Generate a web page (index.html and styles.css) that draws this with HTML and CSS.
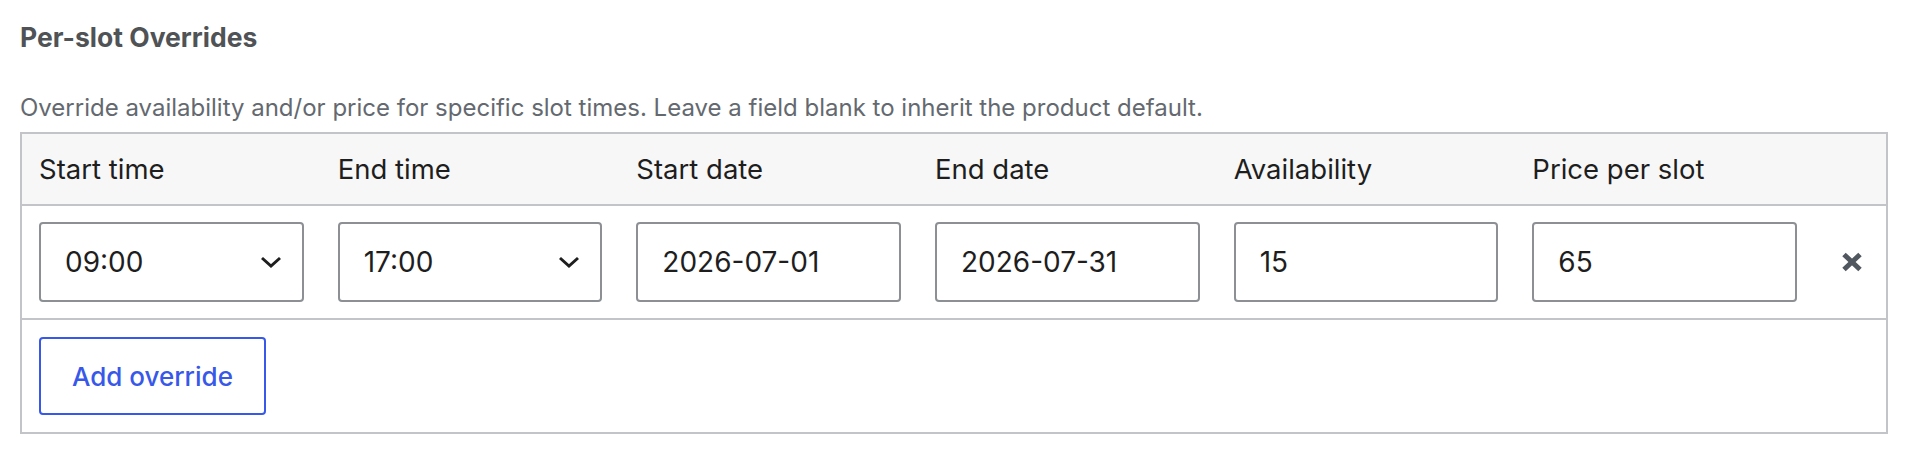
FILE: index.html
```html
<!DOCTYPE html>
<html lang="en">
<head>
<meta charset="utf-8">
<title>Per-slot Overrides</title>
<link rel="stylesheet" href="styles.css">
</head>
<body>
<div class="panel">
  <h3 class="title">Per-slot Overrides</h3>
  <p class="desc">Override availability and/or price for specific slot times. Leave a field blank to inherit the product default.</p>
  <div class="table">
    <div class="row head">
      <div class="cell">Start time</div>
      <div class="cell">End time</div>
      <div class="cell">Start date</div>
      <div class="cell">End date</div>
      <div class="cell">Availability</div>
      <div class="cell">Price per slot</div>
      <div class="cell"></div>
    </div>
    <div class="row body">
      <div class="cell">
        <div class="select-wrap">
          <select class="field select"><option>09:00</option></select>
          <svg class="chev" width="22" height="12" viewBox="0 0 22 12"><path d="M2 2 L11 10 L20 2" fill="none" stroke="#1e1e1e" stroke-width="3"/></svg>
        </div>
      </div>
      <div class="cell">
        <div class="select-wrap">
          <select class="field select"><option>17:00</option></select>
          <svg class="chev" width="22" height="12" viewBox="0 0 22 12"><path d="M2 2 L11 10 L20 2" fill="none" stroke="#1e1e1e" stroke-width="3"/></svg>
        </div>
      </div>
      <div class="cell"><input class="field" type="text" value="2026-07-01"></div>
      <div class="cell"><input class="field" type="text" value="2026-07-31"></div>
      <div class="cell"><input class="field" type="text" value="15"></div>
      <div class="cell"><input class="field" type="text" value="65"></div>
      <div class="cell remove">
        <svg width="22" height="20" viewBox="0 0 22 20"><path d="M3 2.5 L19 17.5 M19 2.5 L3 17.5" fill="none" stroke="#50575e" stroke-width="5" stroke-linecap="butt"/></svg>
      </div>
    </div>
    <div class="foot">
      <button class="add" type="button">Add override</button>
    </div>
  </div>
</div>
</body>
</html>
```

FILE: styles.css
```css
html, body {
  margin: 0;
  padding: 0;
  background: #ffffff;
}

body {
  font-family: Inter, "Noto Sans", "Liberation Sans", sans-serif;
  color: #1e1e1e;
}

.panel {
  padding: 19px 20px 0 20px;
}

.title {
  margin: 0;
  font-size: 26.5px;
  line-height: 36px;
  font-weight: 700;
  color: #505356;
}

.desc {
  margin: 36px 0 7px 0;
  font-size: 24px;
  line-height: 34px;
  color: #646970;
}

.table {
  border: 2px solid #c3c4c7;
}

.row {
  display: grid;
  grid-template-columns: repeat(6, 1fr) 72px;
}

.cell {
  padding: 0 17px;
  display: flex;
  align-items: center;
  min-width: 0;
}

.head {
  background: #f7f7f7;
  border-bottom: 2px solid #c3c4c7;
}

.head .cell {
  padding-top: 17px;
  padding-bottom: 17px;
  font-size: 27.5px;
  line-height: 36px;
  color: #1e1e1e;
}

.body {
  border-bottom: 2px solid #c3c4c7;
}

.body .cell {
  padding-top: 16px;
  padding-bottom: 16px;
}

.field {
  box-sizing: border-box;
  width: 100%;
  height: 80px;
  margin: 0;
  padding: 0 24px;
  border: 2px solid #8c8f94;
  border-radius: 4px;
  background: #ffffff;
  font-family: Inter, "Noto Sans", "Liberation Sans", sans-serif;
  font-size: 28px;
  color: #1e1e1e;
  outline: none;
}

.select-wrap {
  position: relative;
  width: 100%;
}

.select {
  appearance: none;
  -webkit-appearance: none;
  display: block;
}

.chev {
  position: absolute;
  right: 22px;
  top: 34px;
  pointer-events: none;
}

.remove {
  justify-content: center;
  padding: 0 0 0 4px;
}

.foot {
  padding: 17px 17px;
}

.add {
  height: 78px;
  padding: 0 31px;
  border: 2px solid #3858e9;
  border-radius: 4px;
  background: #ffffff;
  color: #3858e9;
  font-family: Inter, "Noto Sans", "Liberation Sans", sans-serif;
  font-size: 26px;
  font-weight: 500;
  cursor: pointer;
}
```
